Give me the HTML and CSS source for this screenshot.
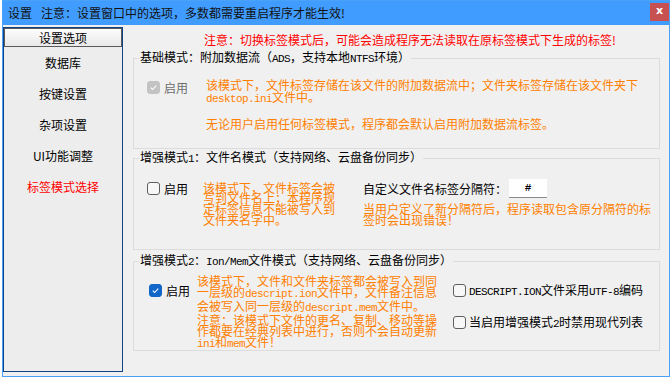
FILE: index.html
```html
<!DOCTYPE html>
<html lang="zh-CN">
<head>
<meta charset="utf-8">
<title>设置</title>
<link rel="stylesheet" href="styles.css">
</head>
<body>
<div class="window">
  <div class="titlebar">
    <span class="title-app">设置</span>
    <span class="title-text">注意：设置窗口中的选项，多数都需要重启程序才能生效!</span>
    <span class="close">x</span>
  </div>
  <div class="body">
    <nav class="sidebar">
      <div class="side-head">设置选项</div>
      <div class="side-item">数据库</div>
      <div class="side-item">按键设置</div>
      <div class="side-item">杂项设置</div>
      <div class="side-item">UI功能调整</div>
      <div class="side-item active">标签模式选择</div>
    </nav>
    <main class="main">
      <p class="warn">注意：切换标签模式后，可能会造成程序无法读取在原标签模式下生成的标签!</p>

      <fieldset class="group g1">
        <legend>基础模式：附加数据流（<span class="m">ADS</span>，支持本地<span class="m">NTFS</span>环境）</legend>
        <div class="row r1">
          <label class="chk disabled w1"><span class="box checked"><svg viewBox="0 0 13 13"><path d="M3.3 6.7 L5.5 8.9 L9.7 4.3"/></svg></span>启用</label>
          <div class="note n1">
            <p>该模式下，文件标签存储在该文件的附加数据流中；文件夹标签存储在该文件夹下<br><span class="m">desktop.ini</span>文件中。</p>
            <p class="p2">无论用户启用任何标签模式，程序都会默认启用附加数据流标签。</p>
          </div>
        </div>
      </fieldset>

      <fieldset class="group g2">
        <legend>增强模式<span class="m">1</span>：文件名模式（支持网络、云盘备份同步）</legend>
        <div class="row r2">
          <label class="chk w2"><span class="box"></span>启用</label>
          <div class="note n2">该模式下，文件标签会被<br>写到文件名上；本程序规<br>定标签信息不能被写入到<br>文件夹名字中。</div>
          <div class="sep-col">
            <div class="sep-row">
              <span class="sep-label">自定义文件名标签分隔符：</span>
              <span class="sep-input">#</span>
            </div>
            <div class="note n2b">当用户定义了新分隔符后，程序读取包含原分隔符的标<br>签时会出现错误！</div>
          </div>
        </div>
      </fieldset>

      <fieldset class="group g3">
        <legend>增强模式<span class="m">2</span>：<span class="m">Ion/Mem</span>文件模式（支持网络、云盘备份同步）</legend>
        <div class="row r3">
          <label class="chk w3"><span class="box checked blue"><svg viewBox="0 0 13 13"><path d="M3.3 6.7 L5.5 8.9 L9.7 4.3"/></svg></span>启用</label>
          <div class="note n3">该模式下，文件和文件夹标签都会被写入到同<br>一层级的<span class="m">descript.ion</span>文件中，文件备注信息<br>会被写入同一层级的<span class="m">descript.mem</span>文件中。<br>注意：该模式下文件的更名、复制、移动等操<br>作都要在经典列表中进行，否则不会自动更新<br><span class="m">ini</span>和<span class="m">mem</span>文件！</div>
          <div class="opts">
            <label class="chk"><span class="box"></span><span><span class="m">DESCRIPT.ION</span>文件采用<span class="m">UTF-8</span>编码</span></label>
            <label class="chk"><span class="box"></span><span>当启用增强模式<span class="m">2</span>时禁用现代列表</span></label>
          </div>
        </div>
      </fieldset>
    </main>
  </div>
</div>
</body>
</html>
```

FILE: styles.css
```css
* { box-sizing: border-box; }
html, body { margin: 0; padding: 0; }
body {
  background: #ffffff;
  width: 672px;
  height: 380px;
  overflow: hidden;
  font-family: "Noto Sans CJK SC", "Microsoft YaHei", sans-serif;
  font-size: 12px;
  color: #000;
}
p { margin: 0; }

.window {
  margin-left: 2px;
  width: 668px;
  height: 377px;
  border: 1px solid #4aa2f8;
  background: #f0f0f0;
  display: flex;
  flex-direction: column;
}

.titlebar {
  height: 24px;
  background: #409cff;
  display: flex;
  align-items: flex-start;
  padding-left: 5px;
  color: #111;
  flex: none;
}
.title-app { line-height: 23px; margin-right: 9px; }
.title-text { line-height: 23px; flex: 1; }
.close {
  margin-top: 2px;
  width: 19px;
  height: 18px;
  background: #c75050;
  color: #fff;
  font-family: "DejaVu Sans", sans-serif;
  font-weight: bold;
  font-size: 11px;
  line-height: 16px;
  text-align: center;
}

.body {
  flex: 1;
  display: flex;
  align-items: flex-start;
}

.sidebar {
  margin-top: 2px;
  width: 120px;
  height: 345px;
  border: 1px solid #0f4384;
  background: #ededed;
  flex: none;
}
.side-head {
  height: 19px;
  border: 1px solid #5a5a5a;
  background: linear-gradient(#fdfdfd, #e9e9e9);
  text-align: center;
  line-height: 17px;
}
.side-item {
  height: 31px;
  line-height: 31px;
  text-align: center;
}
.side-item.active { color: #ff0000; }

.main {
  margin-left: 10px;
  padding-top: 8px;
  width: 527px;
  flex: none;
}

.warn {
  margin-left: 71px;
  color: #ff0000;
  line-height: 14px;
  white-space: nowrap;
}

.group {
  margin: 0;
  padding: 0;
  width: 527px;
  border: 1px solid #dcdcdc;
  min-inline-size: 0;
}
.group legend {
  margin-left: 5px;
  padding: 0 1px;
  line-height: 14px;
  white-space: nowrap;
}
.g1 { margin-top: 3px; height: 99px; }
.g2 { margin-top: 1px; height: 100px; }
.g3 { margin-top: 3px; height: 98px; }

.m {
  font-family: "Liberation Mono", "DejaVu Sans Mono", monospace;
  font-size: 11px;
  letter-spacing: -0.6px;
}

.row {
  display: flex;
  align-items: flex-start;
}
.r1 { padding: 13px 0 0 13px; }
.r2 { padding: 13px 0 0 13px; }
.r3 { padding: 5.5px 0 0 15px; }

.chk {
  display: flex;
  align-items: center;
  gap: 4px;
  height: 13px;
  line-height: 13px;
  white-space: nowrap;
  flex: none;
}
.chk.disabled { color: #6d6d6d; }
.w1 { width: 59px; margin-top: 2px; }
.w2 { width: 56px; margin-top: 3px; }
.w3 { width: 48px; margin-top: 9.5px; }

.box {
  width: 13px;
  height: 13px;
  border: 1px solid #5f5f5f;
  border-radius: 3px;
  background: #f7f7f7;
  flex: none;
  display: flex;
}
.box svg { width: 11px; height: 11px; }
.box svg path { fill: none; stroke: #fff; stroke-width: 1.3; }
.box.checked { background: #c3c3c3; border-color: #c3c3c3; }
.box.checked.blue { background: #1166c8; border-color: #1166c8; }

.note {
  color: #ff8000;
  white-space: nowrap;
  flex: none;
}
.n1 { line-height: 11.5px; }
.n1 .p2 { margin-top: 13px; }
.n2 { width: 132px; line-height: 10.7px; margin-top: 3.5px; }
.n3 { width: 240px; line-height: 11px; }

.sep-col { margin-left: 28px; width: 290px; flex: none; }
.sep-row { display: flex; align-items: center; height: 19px; }
.sep-label { white-space: nowrap; }
.sep-input {
  margin-left: 2px;
  width: 38px;
  height: 19px;
  background: #fff;
  border-bottom: 1px solid #8a8a8a;
  text-align: center;
  line-height: 18px;
  font-family: "Liberation Mono", monospace;
  font-weight: bold;
  font-size: 11px;
}
.n2b { margin-top: 5.3px; line-height: 11px; }

.opts {
  margin-left: 16px;
  margin-top: 9.5px;
  display: flex;
  flex-direction: column;
  gap: 19px;
}
.opts .chk { gap: 3px; }
```
